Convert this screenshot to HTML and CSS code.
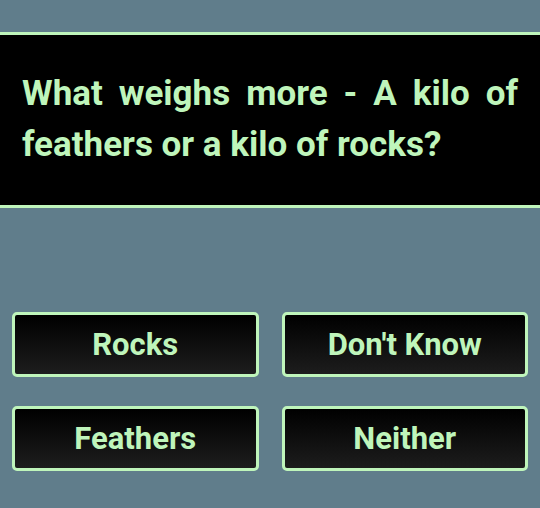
FILE: index.html
```html
<!DOCTYPE html>
<html lang="en">
<head>
<meta charset="utf-8">
<title>Quiz</title>
<link rel="stylesheet" href="styles.css">
</head>
<body>
<main class="quiz">
  <section class="question">
    <p class="question-text">What weighs more - A kilo of feathers or a kilo of rocks?</p>
  </section>
  <section class="answers">
    <button class="answer">Rocks</button>
    <button class="answer">Don't Know</button>
    <button class="answer">Feathers</button>
    <button class="answer">Neither</button>
  </section>
</main>
</body>
</html>
```
FILE: styles.css
```css
html, body {
  margin: 0;
  padding: 0;
}
body {
  background: #607d8b;
  font-family: Roboto, "Liberation Sans", sans-serif;
  width: 540px;
  height: 508px;
  overflow: hidden;
}
.quiz {
  padding-top: 32px;
  display: flex;
  flex-direction: column;
}
.question {
  background: #000;
  border-top: 3px solid #bff5bb;
  border-bottom: 3px solid #bff5bb;
  padding: 33px 22px 35px 22px;
}
.question-text {
  margin: 0;
  color: #bff5bb;
  font-size: 35px;
  font-weight: 700;
  line-height: 51px;
  text-align: justify;
}
.answers {
  margin-top: 104px;
  padding: 0 12px;
  display: grid;
  grid-template-columns: 1fr 1fr;
  column-gap: 23px;
  row-gap: 29px;
}
.answer {
  height: 65px;
  margin: 0;
  border: 3px solid #bff5bb;
  border-radius: 5px;
  background: linear-gradient(#000000, #1d1d1d);
  color: #bff5bb;
  font-family: Roboto, "Liberation Sans", sans-serif;
  font-size: 31px;
  font-weight: 700;
  padding: 0;
}
```
